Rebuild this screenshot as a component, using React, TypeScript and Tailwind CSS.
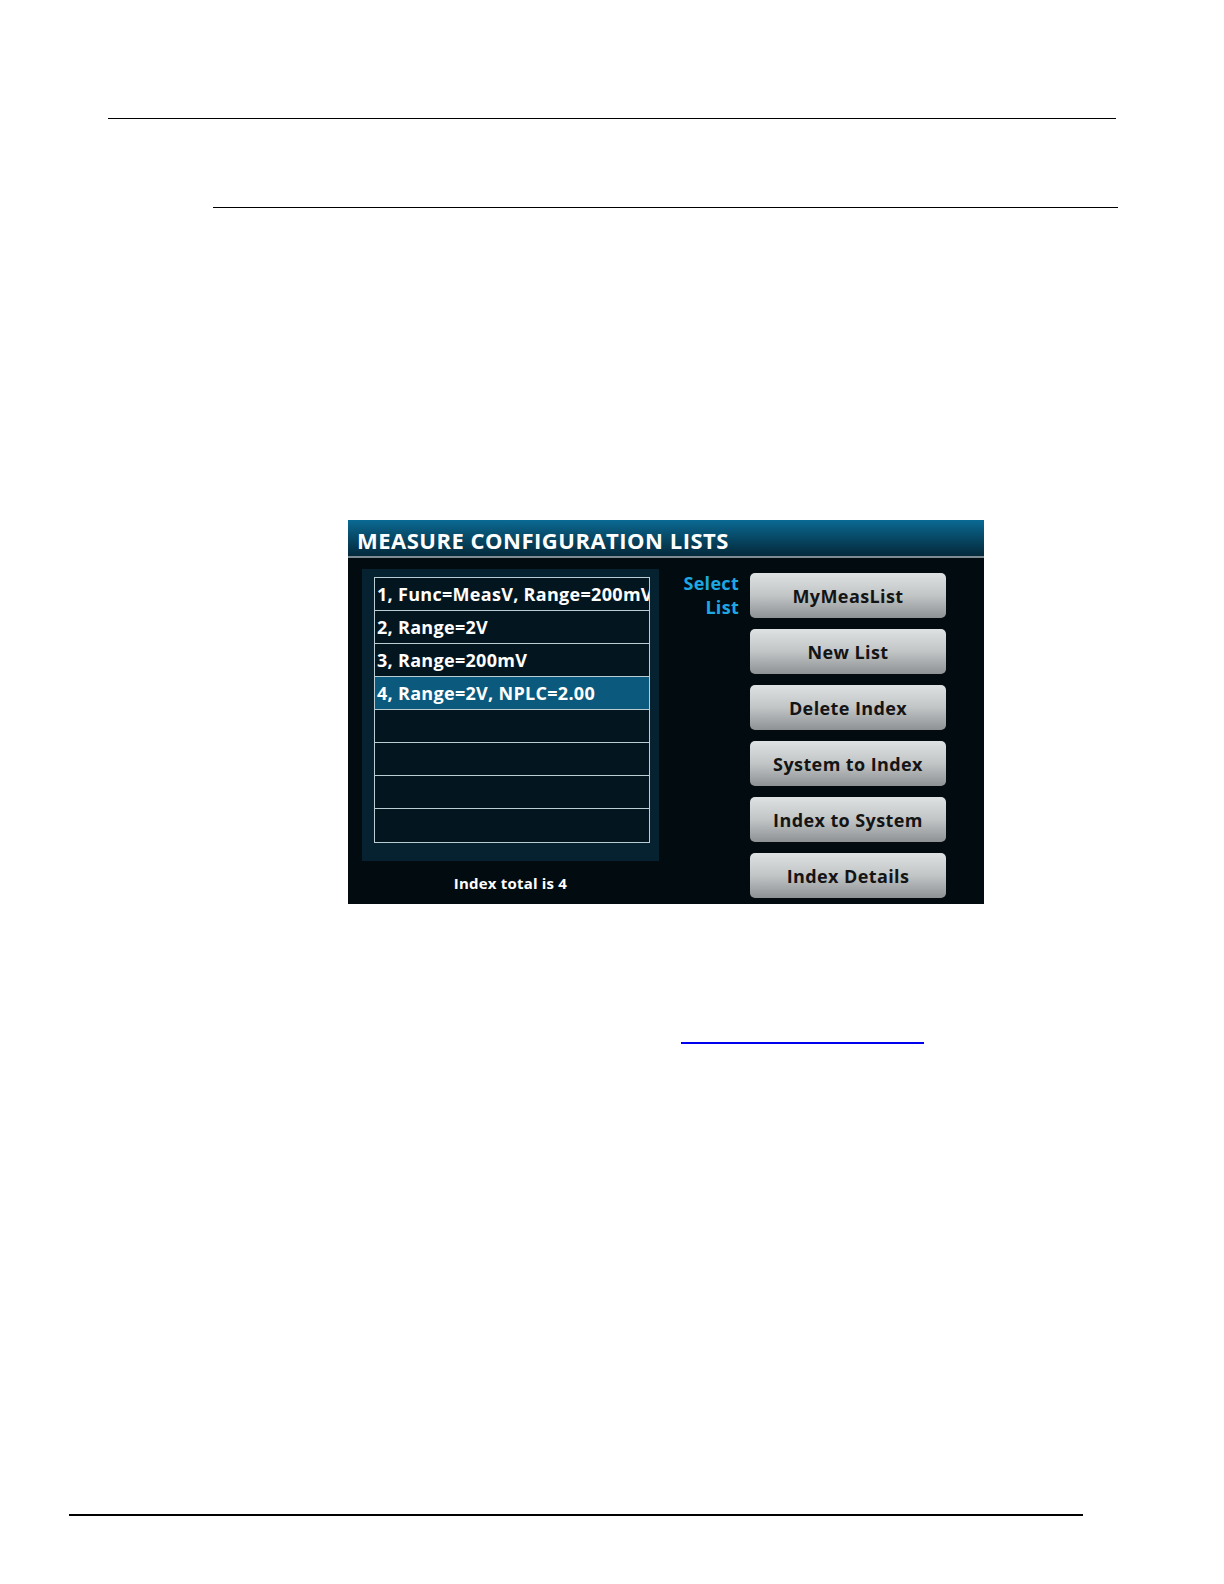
import React from 'react';

const ROWS = ['1, Func=MeasV, Range=200mV, NPLC=1.00', '2, Range=2V', '3, Range=200mV', '4, Range=2V, NPLC=2.00', '', '', '', ''];
const BUTTONS = ['MyMeasList', 'New List', 'Delete Index', 'System to Index', 'Index to System', 'Index Details'];

const font = { fontFamily: '"Open Sans", "DejaVu Sans", sans-serif' };

const Screen: React.FC = () => (
    <div className="w-[636px] h-[384px] bg-[#020b10] flex flex-col overflow-hidden" style={font}>
        {/* Title bar */}
        <div className="h-[36px] bg-gradient-to-b from-[#0a6a94] to-[#04293b] flex items-center pl-[9px] pt-[3px]">
            <span className="text-white font-bold text-[22px] leading-none tracking-[0.5px]">MEASURE CONFIGURATION LISTS</span>
        </div>
        <div className="h-[2px] bg-[#7d8c92]" />

        <div className="flex items-start pl-[14px] pt-[11px]">
            {/* List panel */}
            <div className="w-[297px] flex flex-col items-center">
                <div className="w-[297px] bg-[#062230] pt-[8px] pb-[18px] pl-[12px]">
                    <div className="w-[276px] border border-[#b9cdd2] divide-y divide-[#b9cdd2]">
                        {ROWS.map((r, i) => (
                            <div key={i} className={`h-[33px] flex items-center pl-[2px] overflow-hidden whitespace-nowrap ${i === 3 ? 'bg-[#0b5a7d]' : 'bg-[#03161f]'}`}>
                                <span className="text-white font-bold text-[18px] leading-none tracking-[0.3px]">{r}</span>
                            </div>
                        ))}
                    </div>
                </div>
                <span className="mt-[13px] text-white font-bold text-[15px] leading-[18px] tracking-[0.2px]">Index total is 4</span>
            </div>

            {/* Select label */}
            <div className="w-[91px] pr-[11px] mt-[4px] flex flex-col items-end gap-[4px] text-[#1ea8e2] font-bold text-[18px] leading-[20px] tracking-[0.3px]">
                <span>Select</span>
                <span>List</span>
            </div>

            {/* Buttons */}
            <div className="w-[196px] mt-[4px] flex flex-col gap-[11px]">
                {BUTTONS.map(b => (
                    <div key={b} className="h-[45px] rounded-[5px] bg-gradient-to-b from-[#dfe2e3] via-[#c2c5c6] to-[#8f9294] flex items-center justify-center">
                        <span className="text-[#141414] font-bold text-[18px] leading-none tracking-[0.4px]">{b}</span>
                    </div>
                ))}
            </div>
        </div>
    </div>
);

export default function App() {
    return (
        <div className="w-[1224px] h-[1584px] bg-white flex flex-col">
            <div className="mt-[118px] ml-[108px] w-[1008px] h-px bg-black" />
            <div className="mt-[88px] ml-[213px] w-[905px] h-px bg-black" />
            <div className="mt-[312px] ml-[348px]">
                <Screen />
            </div>
            <div className="mt-[138px] ml-[681px] w-[243px] h-[2px] bg-[#0000ee]" />
            <div className="mt-[470px] ml-[69px] w-[1014px] h-[2px] bg-black" />
        </div>
    );
}
